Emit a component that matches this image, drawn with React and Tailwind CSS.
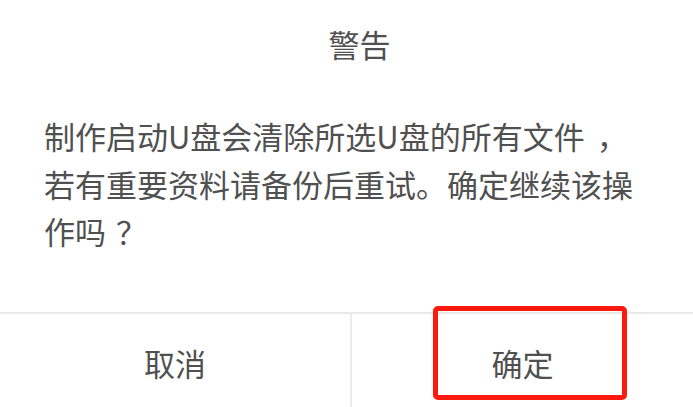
export default function App() {
  const font = { fontFamily: '"Noto Sans CJK SC", "Noto Sans", sans-serif' }
  return (
    <div className="relative flex h-[407px] w-[693px] flex-col overflow-hidden bg-white text-[#505050]" style={font}>
      <div className="flex h-[86px] items-center justify-center pl-[26px] text-[31px] leading-none">警告</div>

      <div className="flex-1 pl-[44px] pt-[26px] text-[31px] leading-[47.5px] whitespace-nowrap">
        制作启动U盘会清除所选U盘的所有文件<span className="ml-[12px]">，</span><br />
        若有重要资料请备份后重试。确定继续该操<br />
        作吗<span className="ml-[10px]">？</span>
      </div>

      <div className="flex h-[95px] border-t-2 border-[#e9e9e9] text-[31px]">
        <button className="flex w-[350px] items-center justify-center pt-[6px] text-[#505050]">取消</button>
        <button className="flex flex-1 items-center justify-center border-l-2 border-[#ececec] pt-[6px] text-[#505050]">确定</button>
      </div>

      {/* annotation frame */}
      <div className="pointer-events-none absolute left-[433px] top-[306px] h-[94px] w-[194px] rounded-[5px] border-[5px] border-[#ff1a0d]" />
    </div>
  )
}
